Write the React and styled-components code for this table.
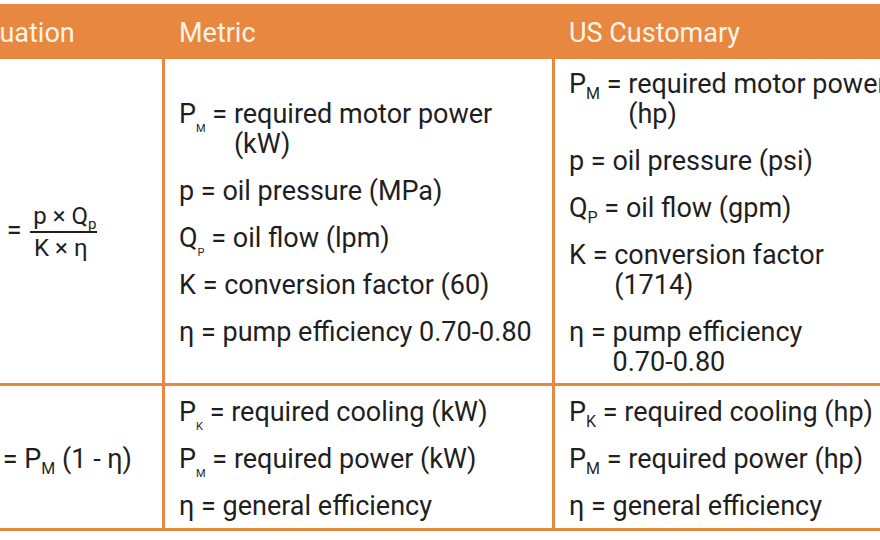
import React from 'react';
import styled, { createGlobalStyle } from 'styled-components';

const ORANGE = '#e8873f';
const INK = '#1f1f1f';

const GlobalStyle = createGlobalStyle`
  html, body {
    margin: 0;
    padding: 0;
    background: #fff;
    overflow: hidden;
  }
  body {
    font-family: Roboto, "Liberation Sans", Arial, sans-serif;
  }
`;

const Page = styled.div`
  width: 880px;
  height: 540px;
  overflow: hidden;
  padding-top: 4px;
  box-sizing: border-box;
  background: #fff;
`;

const Table = styled.div`
  display: grid;
  grid-template-columns: 210px 390px 362px;
  grid-template-rows: 55px 327px 145px;
  margin-left: -45px;
  width: max-content;
`;

const HeadCell = styled.div`
  background: ${ORANGE};
  color: #fff4e8;
  font-size: 27px;
  display: flex;
  align-items: center;
  padding: 2px 14px 0;
`;

const Cell = styled.div`
  box-sizing: border-box;
  border-bottom: 3px solid ${ORANGE};
  border-right: ${p => (p.$last ? 'none' : `3px solid ${ORANGE}`)};
  display: flex;
  flex-direction: column;
  justify-content: center;
  gap: 17px;
  padding: ${p => p.$top ?? 4}px 14px 0;
  color: ${INK};
  font-size: 27px;
`;

const Item = styled.div`
  display: flex;
  line-height: 30px;
`;

const Term = styled.span`
  flex: none;
  white-space: pre;
`;

const Desc = styled.span`
  flex: 1;
`;

const Keep = styled.span`
  white-space: nowrap;
`;

const Sub = styled.sub`
  font-size: ${p => p.$size}px;
  vertical-align: ${p => p.$drop}px;
  line-height: 0;
`;

const Equation = styled.div`
  line-height: 30px;
  white-space: nowrap;
`;

const Frac = styled.span`
  display: inline-flex;
  flex-direction: column;
  align-items: center;
  vertical-align: middle;
  font-size: 24px;
  line-height: 24px;
  margin-left: 2px;
`;

const Num = styled.span`
  padding: 0 1px 3px 3px;
  border-bottom: 2px solid ${INK};
`;

const Den = styled.span`
  padding: 3px 6px 0 0;
`;

const small = { $size: 11, $drop: -9 };
const big = { $size: 16, $drop: -6 };

function Sym({ base, sub, s }) {
  return (
    <>
      {base}
      {sub && <Sub {...s}>{sub}</Sub>}
    </>
  );
}

const rows = [
  {
    metric: [
      ['P', 'M', 'required motor power (kW)'],
      ['p', null, 'oil pressure (MPa)'],
      ['Q', 'P', 'oil flow (lpm)'],
      ['K', null, 'conversion factor (60)'],
      ['η', null, 'pump efficiency ', '0.70-0.80'],
    ],
    us: [
      ['P', 'M', 'required motor power (hp)'],
      ['p', null, 'oil pressure (psi)'],
      ['Q', 'P', 'oil flow (gpm)'],
      ['K', null, 'conversion factor (1714)'],
      ['η', null, 'pump efficiency ', '0.70-0.80'],
    ],
  },
  {
    metric: [
      ['P', 'K', 'required cooling (kW)'],
      ['P', 'M', 'required power (kW)'],
      ['η', null, 'general efficiency'],
    ],
    us: [
      ['P', 'K', 'required cooling (hp)'],
      ['P', 'M', 'required power (hp)'],
      ['η', null, 'general efficiency'],
    ],
  },
];

function Legend({ items, s, last }) {
  return (
    <Cell $last={last}>
      {items.map(([base, sub, text, tail], i) => (
        <Item key={i}>
          <Term>
            <Sym base={base} sub={sub} s={s} />
            {' = '}
          </Term>
          <Desc>
            {text}
            {tail && <Keep>{tail}</Keep>}
          </Desc>
        </Item>
      ))}
    </Cell>
  );
}

export default function App() {
  return (
    <Page>
      <GlobalStyle />
      <Table>
        <HeadCell>Equation</HeadCell>
        <HeadCell>Metric</HeadCell>
        <HeadCell>US Customary</HeadCell>

        <Cell $top={22}>
          <Equation>
            <Sym base="P" sub="M" s={big} />
            {' = '}
            <Frac>
              <Num>
                p × Q<Sub $size={15} $drop={-5}>p</Sub>
              </Num>
              <Den>K × η</Den>
            </Frac>
          </Equation>
        </Cell>
        <Legend items={rows[0].metric} s={small} />
        <Legend items={rows[0].us} s={big} last />

        <Cell>
          <Equation>
            <Sym base="P" sub="K" s={big} />
            {' = '}
            <Sym base="P" sub="M" s={big} />
            {' (1 - η)'}
          </Equation>
        </Cell>
        <Legend items={rows[1].metric} s={small} />
        <Legend items={rows[1].us} s={big} last />
      </Table>
    </Page>
  );
}
